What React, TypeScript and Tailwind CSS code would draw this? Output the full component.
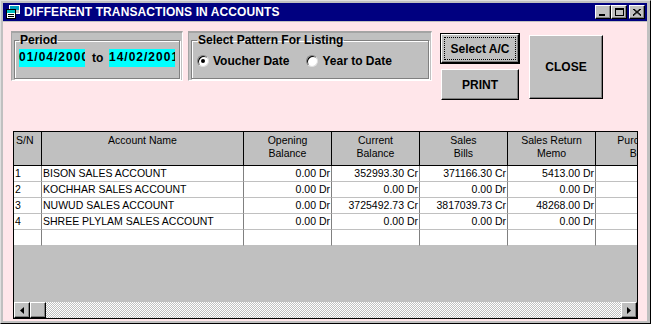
import React from "react";

const rows = [
  { sn: "1", name: "BISON SALES ACCOUNT", ob: "0.00 Dr", cb: "352993.30 Cr", sb: "371166.30 Cr", sr: "5413.00 Dr" },
  { sn: "2", name: "KOCHHAR SALES ACCOUNT", ob: "0.00 Dr", cb: "0.00 Dr", sb: "0.00 Dr", sr: "0.00 Dr" },
  { sn: "3", name: "NUWUD SALES ACCOUNT", ob: "0.00 Dr", cb: "3725492.73 Cr", sb: "3817039.73 Cr", sr: "48268.00 Dr" },
  { sn: "4", name: "SHREE PLYLAM SALES ACCOUNT", ob: "0.00 Dr", cb: "0.00 Dr", sb: "0.00 Dr", sr: "0.00 Dr" },
  { sn: "", name: "", ob: "", cb: "", sb: "", sr: "" },
];

const headers = [
  { a: "S/N", b: "", left: true },
  { a: "Account Name", b: "" },
  { a: "Opening", b: "Balance" },
  { a: "Current", b: "Balance" },
  { a: "Sales", b: "Bills" },
  { a: "Sales Return", b: "Memo" },
  { a: "Purchase", b: "Bills" },
];

const raised =
  "border border-t-white border-l-white border-r-black border-b-black shadow-[inset_-1px_-1px_0_#808080] bg-[#c0c0c0]";

function TitleIcon() {
  return (
    <svg width="16" height="16" viewBox="0 0 16 16">
      <rect x="4.5" y="1.5" width="10" height="8" fill="#c0c0c0" stroke="#fff" />
      <rect x="5" y="2" width="9" height="4" fill="#00a0c0" />
      <rect x="1.5" y="5.5" width="9" height="9" fill="#fff" stroke="#000" />
      <rect x="2" y="6" width="8" height="3" fill="#00c0c0" />
      <rect x="3" y="10" width="6" height="1" fill="#000" />
      <rect x="3" y="12" width="6" height="1" fill="#000" />
    </svg>
  );
}

function WinBtn({ children }: { children: React.ReactNode }) {
  return <div className={`w-[16px] h-[14px] flex items-center justify-center ${raised}`}>{children}</div>;
}

function Radio({ checked }: { checked?: boolean }) {
  return (
    <span className="w-[12px] h-[12px] rounded-full bg-white border border-t-[#808080] border-l-[#808080] border-r-[#dfdfdf] border-b-[#dfdfdf] shadow-[inset_1px_1px_0_#000] flex items-center justify-center shrink-0">
      {checked && <span className="w-[4px] h-[4px] rounded-full bg-black" />}
    </span>
  );
}

function Panel({ className, children }: { className: string; children: React.ReactNode }) {
  return (
    <div
      className={`bg-[#c0c0c0] border-t-[2px] border-l border-t-[#a4a4a4] border-l-[#a4a4a4] border-r border-b border-r-white border-b-white px-[2px] ${className}`}
    >
      {children}
    </div>
  );
}

function Arrow({ dir }: { dir: "l" | "r" }) {
  return (
    <svg width="4" height="7" viewBox="0 0 4 7">
      {dir === "l" ? <polygon points="4,0 4,7 0,3.5" fill="#000" /> : <polygon points="0,0 0,7 4,3.5" fill="#000" />}
    </svg>
  );
}

export default function App() {
  const cols = "grid grid-cols-[28px_202px_88px_88px_88px_88px_88px]";
  return (
    <div
      className="w-[651px] h-[324px] bg-[#c0c0c0] border-t border-l border-t-[#dfdfdf] border-l-[#dfdfdf] border-r border-b border-r-black border-b-black pt-[2px] pl-[2px] pr-[3px] pb-[2px] flex flex-col overflow-hidden"
      style={{ fontFamily: '"Liberation Sans", Arial, sans-serif' }}
    >
      {/* title bar */}
      <div className="h-[18px] bg-[#000080] flex items-center pl-[2px] pr-[2px] shrink-0">
        <TitleIcon />
        <span className="ml-[3px] text-white font-bold text-[12px] leading-none tracking-[0.1px]">
          DIFFERENT TRANSACTIONS IN ACCOUNTS
        </span>
        <div className="ml-auto flex items-center">
          <WinBtn>
            <span className="w-[6px] h-[2px] bg-black mt-[6px] -ml-[2px]" />
          </WinBtn>
          <WinBtn>
            <span className="w-[9px] h-[8px] border border-black border-t-2" />
          </WinBtn>
          <div className="ml-[2px]">
            <WinBtn>
              <svg width="8" height="7" viewBox="0 0 8 7">
                <path d="M0 0 L8 7 M1 0 L8 6 M8 0 L0 7 M7 0 L0 6" stroke="#000" strokeWidth="1" />
              </svg>
            </WinBtn>
          </div>
        </div>
      </div>

      {/* body */}
      <div className="flex-1 mt-[1px] bg-[#ffe6ea] flex flex-col">
        <div className="flex items-start ml-[8px] mt-[9px] h-[68px] shrink-0">
          <Panel className="w-[172px] h-[50px]">
            <fieldset className="mt-[1px] h-[45px] border border-[#808080] shadow-[inset_1px_1px_0_#fff,1px_1px_0_#fff] px-[4px]">
              <legend className="px-[1px] text-[12px] font-bold leading-[13px] text-black">Period</legend>
              <div className="flex items-center mt-[2px] text-[12px] font-bold text-black">
                <span className="w-[66px] h-[18px] bg-[#00ffff] overflow-hidden whitespace-nowrap leading-[16px] tracking-[1px]">
                  01/04/2000
                </span>
                <span className="ml-[7px] w-[17px]">to</span>
                <span className="w-[66px] h-[18px] bg-[#00ffff] overflow-hidden whitespace-nowrap leading-[16px] tracking-[1px]">
                  14/02/2001
                </span>
              </div>
            </fieldset>
          </Panel>

          <Panel className="ml-[5px] w-[244px] h-[50px]">
            <fieldset className="mt-[1px] h-[45px] border border-[#808080] shadow-[inset_1px_1px_0_#fff,1px_1px_0_#fff] px-[5px]">
              <legend className="px-[1px] text-[12px] font-bold leading-[13px] text-black">
                Select Pattern For Listing
              </legend>
              <div className="flex items-center mt-[5px] text-[12px] font-bold text-black">
                <Radio checked />
                <span className="ml-[4px]">Voucher Date</span>
                <span className="ml-[17px]">
                  <Radio />
                </span>
                <span className="ml-[4px]">Year to Date</span>
              </div>
            </fieldset>
          </Panel>

          <div className="ml-[8px] mt-[2px] flex flex-col">
            <div className="w-[80px] h-[31px] border border-black">
              <div className={`w-full h-full ${raised} p-[2px]`}>
                <div className="w-full h-full border border-dotted border-black flex items-center justify-center text-[12px] font-bold text-black">
                  Select A/C
                </div>
              </div>
            </div>
            <div className={`mt-[5px] ml-[1px] w-[78px] h-[31px] flex items-center justify-center text-[12px] font-bold text-black ${raised}`}>
              PRINT
            </div>
          </div>

          <div className={`ml-[9px] mt-[4px] w-[74px] h-[64px] flex items-center justify-center text-[12px] font-bold text-black ${raised}`}>
            CLOSE
          </div>
        </div>

        {/* grid */}
        <div className="ml-[10px] mt-[32px] w-[625px] h-[188px] border border-black bg-[#c0c0c0] flex flex-col overflow-hidden text-[10.5px] text-black shrink-0">
          <div className={`${cols} h-[34px] border-b border-black shrink-0`}>
            {headers.map((h, i) => (
              <div
                key={i}
                className={`border-r border-black pt-[2px] leading-[13px] whitespace-nowrap overflow-hidden ${
                  h.left ? "text-left pl-[2px]" : "text-center"
                }`}
              >
                <div>{h.a}</div>
                {h.b && <div>{h.b}</div>}
              </div>
            ))}
          </div>
          {rows.map((r, i) => (
            <div key={i} className={`${cols} h-[16px] bg-white shrink-0`}>
              {[r.sn, r.name, r.ob, r.cb, r.sb, r.sr, ""].map((v, j) => (
                <div
                  key={j}
                  className={`border-r border-b border-r-[#808080] border-b-[#c0c0c0] leading-[15px] whitespace-nowrap overflow-hidden ${
                    j < 2 ? "text-left pl-[1px]" : "text-right pr-[1px]"
                  }`}
                >
                  {v}
                </div>
              ))}
            </div>
          ))}
          <div className="flex-1" />
          {/* scrollbar */}
          <div className="h-[16px] flex shrink-0">
            <div className={`w-[16px] h-[16px] flex items-center justify-center ${raised}`}>
              <Arrow dir="l" />
            </div>
            <div className={`w-[16px] h-[16px] ${raised}`} />
            <div className="flex-1 bg-[repeating-conic-gradient(#c0c0c0_0_25%,#ffffff_0_50%)] bg-[length:2px_2px]" />
            <div className={`w-[16px] h-[16px] flex items-center justify-center ${raised}`}>
              <Arrow dir="r" />
            </div>
          </div>
        </div>
      </div>
    </div>
  );
}
